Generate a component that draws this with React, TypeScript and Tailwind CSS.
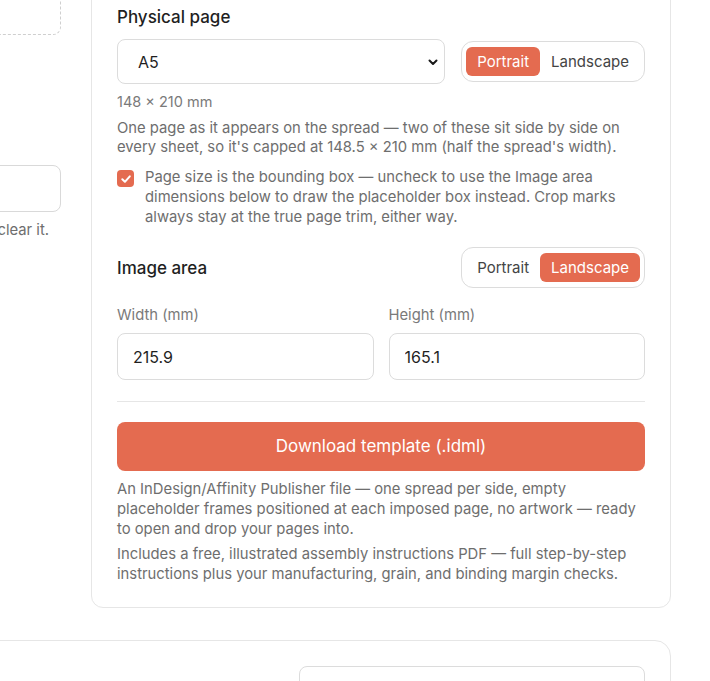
import React, { useState } from 'react';

const Toggle: React.FC<{ value: 'portrait' | 'landscape'; onChange: (v: 'portrait' | 'landscape') => void }> = ({ value, onChange }) => {
  const pill = (active: boolean) =>
    active
      ? 'bg-[#e46b50] text-white'
      : 'bg-transparent text-[#444]';
  return (
    <div className="flex items-center rounded-xl border border-[#dcdcdc] bg-white px-1 py-[5px]">
      <button
        onClick={() => onChange('portrait')}
        className={`h-[29px] rounded-md px-[11px] text-[15px] leading-none ${pill(value === 'portrait')}`}
      >
        Portrait
      </button>
      <button
        onClick={() => onChange('landscape')}
        className={`h-[29px] rounded-md px-[11px] text-[15px] leading-none ${pill(value === 'landscape')}`}
      >
        Landscape
      </button>
    </div>
  );
};

export default function App() {
  const [pageOrient, setPageOrient] = useState<'portrait' | 'landscape'>('portrait');
  const [areaOrient, setAreaOrient] = useState<'portrait' | 'landscape'>('landscape');
  const [bounding, setBounding] = useState(true);
  const [width, setWidth] = useState('215.9');
  const [height, setHeight] = useState('165.1');

  return (
    <div className="min-h-screen overflow-hidden bg-white font-['Inter',sans-serif] text-[#1f1f1f]">
      <div className="-mt-[20px] ml-[-300px] flex w-[971px] gap-[30px]">
        {/* Left column (cut off) */}
        <div className="w-[361px] shrink-0">
          <div className="h-[55px] rounded-lg border border-dashed border-[#cfcfcf]" />
          <div className="mt-[130px] h-[47px] rounded-lg border border-[#d9d9d9]" />
          <p className="mt-2 pr-3 text-right text-[14.8px] leading-5 text-[#6e6e6e]">
            Empty the field to clear it.
          </p>
        </div>

        {/* Right column */}
        <div className="w-[580px] shrink-0">
          <div className="rounded-xl border border-[#e6e6e6] bg-white px-[25px] pb-[23px] pt-6">
            <h2 className="text-[17px] font-medium leading-6">Physical page</h2>

            <div className="mt-2.5 flex items-center gap-4">
              <div className="relative flex-1">
                <select
                  defaultValue="A5"
                  className="h-[45px] w-full appearance-none rounded-lg border border-[#dcdcdc] bg-white pl-5 text-[16px] text-[#1f1f1f] outline-none"
                >
                  <option>A4</option>
                  <option>A5</option>
                  <option>A6</option>
                </select>
                <svg
                  className="pointer-events-none absolute right-[6px] top-1/2 -translate-y-1/2"
                  width="12"
                  height="12"
                  viewBox="0 0 12 12"
                  fill="none"
                >
                  <path d="M2.5 4.5 6 8l3.5-3.5" stroke="#1a1a1a" strokeWidth="2" strokeLinecap="round" strokeLinejoin="round" />
                </svg>
              </div>
              <Toggle value={pageOrient} onChange={setPageOrient} />
            </div>

            <p className="mt-[9px] text-[14.5px] leading-[18px] text-[#7a7a7a]">148 × 210 mm</p>
            <p className="mt-2 text-[14.8px] leading-[19px] text-[#6e6e6e]">
              One page as it appears on the spread — two of these sit side by side on every sheet, so it's capped at 148.5 × 210 mm (half the spread's width).
            </p>

            <label className="mt-2.5 flex cursor-pointer items-start gap-[11px]">
              <span
                onClick={() => setBounding(!bounding)}
                className={`mt-[3px] flex h-[17px] w-[17px] shrink-0 items-center justify-center rounded-[4px] ${bounding ? 'bg-[#e46b50]' : 'border border-[#bbb] bg-white'}`}
              >
                {bounding && (
                  <svg width="12" height="12" viewBox="0 0 12 12" fill="none">
                    <path d="M2.3 6.3 4.9 8.8 9.8 3.3" stroke="white" strokeWidth="2" strokeLinecap="round" strokeLinejoin="round" />
                  </svg>
                )}
              </span>
              <span className="text-[14.8px] leading-5 text-[#6e6e6e]">
                Page size is the bounding box — uncheck to use the Image area dimensions below to draw the placeholder box instead. Crop marks always stay at the true page trim, either way.
              </span>
            </label>

            <div className="mt-5 flex items-center justify-between">
              <h3 className="text-[17px] font-medium leading-6">Image area</h3>
              <Toggle value={areaOrient} onChange={setAreaOrient} />
            </div>

            <div className="mt-[17px] grid grid-cols-2 gap-[15px]">
              <div>
                <div className="text-[14.8px] leading-5 text-[#7a7a7a]">Width (mm)</div>
                <input
                  value={width}
                  onChange={(e) => setWidth(e.target.value)}
                  className="mt-2 h-[47px] w-full rounded-lg border border-[#dcdcdc] px-[15px] text-[16px] text-[#1f1f1f] outline-none"
                />
              </div>
              <div>
                <div className="text-[14.8px] leading-5 text-[#7a7a7a]">Height (mm)</div>
                <input
                  value={height}
                  onChange={(e) => setHeight(e.target.value)}
                  className="mt-2 h-[47px] w-full rounded-lg border border-[#dcdcdc] px-[15px] text-[16px] text-[#1f1f1f] outline-none"
                />
              </div>
            </div>

            <div className="mt-[21px] h-px bg-[#e6e6e6]" />

            <button className="mt-5 h-[49px] w-full rounded-lg bg-[#e46b50] text-[17px] text-white">
              Download template (.idml)
            </button>

            <p className="mt-2 text-[14.8px] leading-5 text-[#6e6e6e]">
              An InDesign/Affinity Publisher file — one spread per side, empty placeholder frames positioned at each imposed page, no artwork — ready to open and drop your pages into.
            </p>
            <p className="mt-[5px] text-[14.8px] leading-5 text-[#6e6e6e]">
              Includes a free, illustrated assembly instructions PDF — full step-by-step instructions plus your manufacturing, grain, and binding margin checks.
            </p>
          </div>
        </div>
      </div>

      {/* Next card (cut off) */}
      <div className="ml-[-300px] mt-8 w-[971px] rounded-2xl border border-[#e6e6e6] bg-white pr-[25px] pt-[25px]">
        <div className="flex justify-end">
          <div className="h-[60px] w-[346px] rounded-lg border border-[#dcdcdc]" />
        </div>
      </div>
    </div>
  );
}
